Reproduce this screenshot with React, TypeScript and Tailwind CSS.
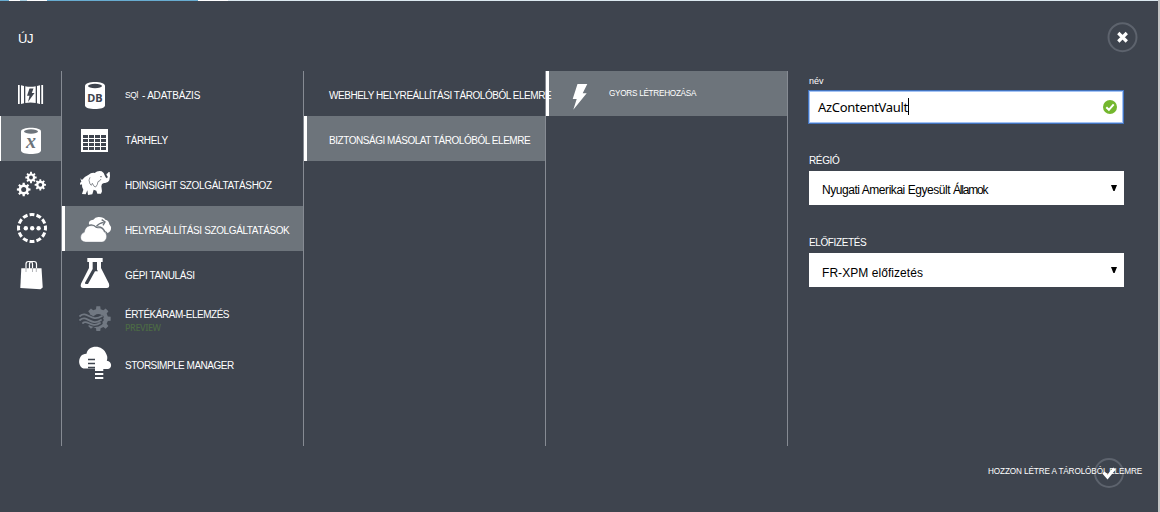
import type { ReactNode } from "react";

const BG = "#3e444e";
const SEL = "#6d747b";

function gearPath(cx: number, cy: number, outer: number, inner: number, teeth: number, offset = 0) {
  const step = (Math.PI * 2) / teeth;
  const pts: string[] = [];
  for (let i = 0; i < teeth; i++) {
    const a = i * step + offset - Math.PI / 2;
    const marks: [number, number][] = [
      [-0.3, inner],
      [-0.2, outer],
      [0.2, outer],
      [0.3, inner],
    ];
    for (const [t, r] of marks) {
      pts.push(`${(cx + Math.cos(a + t * step) * r).toFixed(2)} ${(cy + Math.sin(a + t * step) * r).toFixed(2)}`);
    }
  }
  return `M${pts.join("L")}Z`;
}

function Gear({ cx, cy, r, hole }: { cx: number; cy: number; r: number; hole: number }) {
  return (
    <>
      <path d={gearPath(cx, cy, r, r * 0.74, 8)} fill="#fff" />
      <circle cx={cx} cy={cy} r={hole} fill={BG} />
    </>
  );
}

function RailItem({ y, selected, children }: { y: number; selected?: boolean; children: ReactNode }) {
  return (
    <div className={selected ? "h-[45px] border-l border-white bg-[#6d747b]" : "h-[45px] border-l border-transparent"}>
      <svg className="block h-[45px] w-[60px]" viewBox={`1 ${y} 60 45`}>
        {children}
      </svg>
    </div>
  );
}

function ServiceItem({
  y,
  selected,
  icon,
  children,
}: {
  y: number;
  selected?: boolean;
  icon: ReactNode;
  children: ReactNode;
}) {
  return (
    <div
      className={
        selected
          ? "flex h-[45px] items-center border-l-[3px] border-white bg-[#6d747b]"
          : "flex h-[45px] items-center border-l-[3px] border-transparent"
      }
    >
      <svg className="block h-[45px] w-[60px] shrink-0" viewBox={`65 ${y} 60 45`}>
        {icon}
      </svg>
      <div className="pt-[5px] leading-[14px] whitespace-nowrap">{children}</div>
    </div>
  );
}

function Select({ children }: { children: ReactNode }) {
  return (
    <div className="flex h-[34px] items-center justify-between bg-white pr-[7px] pl-[13px] tracking-normal text-black">
      {children}
      <svg className="h-[6px] w-[6px]" viewBox="0 0 6 6">
        <path d="M0 0H6L3.6 6H2.4Z" fill="#000" />
      </svg>
    </div>
  );
}

const databaseIcon = (
  <>
    <path d="M85 86C85 80.800 105 80.800 105 86V105.500C105 110.300 85 110.300 85 105.500Z" fill="#fff" />
    <ellipse cx="95" cy="86" rx="7" ry="2.200" fill={BG} />
    <text x="95" y="102" textAnchor="middle" fontFamily="Noto Sans, sans-serif" fontWeight="700" fontSize="11" letterSpacing="0" fill={BG}>
      DB
    </text>
  </>
);

const tableIcon = (
  <>
    <rect x="81" y="129" width="27" height="23" fill="#fff" />
    {[135, 139, 143, 147].map((y) =>
      [83, 89, 95, 101].map((x) => <rect key={`${x}-${y}`} x={x} y={y} width="5" height="3" fill={BG} />),
    )}
  </>
);

const elephantIcon = (
  <g transform="translate(60 65) scale(.33333)">
    <path
      d="M61 340L66 345Q74 334 86 329Q94 322 104 324Q113 316 125 319Q132 322 135 333Q138 341 142 339Q145 335 140 331Q137 327 143 325Q145 320 149 321Q152 335 148 346Q143 356 132 354L126 357L124 364L126 379L123 386H112L109 377L101 374L97 388L84 390L82 376L77 388L66 387L70 374Q65 368 66 358L61 360L60 354L64 350Z"
      fill="#fff"
    />
    <path d="M90 337Q84 344 90 357L94 361L97 355Q103 368 107 366Q113 360 114 350Q121 348 123 342" fill="none" stroke={BG} strokeWidth="1.800" />
    <circle cx="123" cy="335" r="2" fill={BG} />
  </g>
);

const cloudsIcon = (
  <g transform="translate(60 200) scale(.33333)">
    <path
      d="M87 74Q84 61 100 59Q106 50 117 51Q131 51 136 59Q147 61 148 73Q154 79 153 88Q150 100 135 101L120 90L100 78Z"
      fill="#fff"
    />
    <path
      d="M77 126Q62 125 62 112Q62 101 73 97Q75 80 90 77Q104 74 114 85Q129 82 132 96Q142 101 139 115Q135 126 126 126Z"
      fill="#fff"
      stroke={SEL}
      strokeWidth="1"
    />
    <path d="M109 79Q117 69 131 67M125 59L135 66L129 76" fill="none" stroke={SEL} strokeWidth="4" />
    <path d="M84 77Q98 70 109 82Q126 77 134 94Q140 96 142 102" fill="none" stroke={SEL} strokeWidth="4" />
  </g>
);

const flaskIcon = (
  <g transform="translate(60 200) scale(.33333)">
    <path
      d="M82 174H128V186H123V204L147 251Q150 264 140 264H71Q59 264 63 251L87 204V186H82Z"
      fill="#fff"
    />
    <path d="M98 186H111V209L114 214H105L84 252H76L75 248L98 207Z" fill={BG} />
  </g>
);

const streamIcon = (
  <>
    <path d={gearPath(98.300, 318.700, 12.500, 9.800, 8)} fill="#717882" />
    <circle cx="98.300" cy="318.700" r="4.800" fill={BG} />
    <path d="M78 308H88V328H79Z" fill={BG} />
    <g fill="none" strokeLinecap="round">
      <path d="M80 316C87 309 91 323 102 317M80 320C87 313 91 327 102 320M82 323C87 318 92 330 101 323" stroke={BG} strokeWidth="3.500" />
      <path d="M80 316C87 310 91 323 102 316M80 320C87 314 91 327 101 320M83 323C87 319 92 329 100 323" stroke="#717882" strokeWidth="1.800" />
    </g>
  </>
);

const storsimpleIcon = (
  <>
    <path
      d="M85 368.500C77 368.500 77 353.500 86.500 353.700C88 344.500 103 344 106.500 354.500C107.800 357 107.300 359 106.800 360.800C112.500 361.500 112.500 369 107.500 369H103.300V371H95V368.500Z"
      fill="#fff"
    />
    <path d="M88 359.500H95M88 363.500H95M88 367.500H95" stroke={BG} strokeWidth="1.400" />
    <path d="M95 374H103.300M95 378H103.300" stroke="#fff" strokeWidth="2" />
  </>
);

export default function App() {
  return (
    <div className="flex h-[512px] w-[1160px] flex-col overflow-hidden border-r-2 border-[#c4c4c4] bg-[#3e444e] font-['Liberation_Sans',Arial,sans-serif] text-[10px] tracking-[-0.38px] text-white">
      <div className="flex h-px shrink-0 bg-white">
        <div className="w-[9px] bg-[#67acd0]" />
        <div className="w-[11px]" />
        <div className="w-[7px] bg-[#a6cfe3]" />
        <div className="w-[20px]" />
        <div className="w-[151px] bg-[#67acd0]" />
        <div className="w-[30px]" />
        <div className="w-[930px] bg-[#dce9f0]" />
      </div>

      <header className="flex h-[70px] shrink-0 items-start justify-between pr-[20px] pl-[18px]">
        <h1 className="mt-[30px] text-[13px] leading-[16px] tracking-[-0.4px]">ÚJ</h1>
        <button className="mt-[21px] block h-[31px] w-[31px]">
          <svg className="block" width="31" height="31" viewBox="0 0 31 31" fill="none">
            <circle cx="15.500" cy="15.200" r="14" stroke="#5d636d" strokeWidth="2" />
            <path d="M11.300 11L19.800 19.500M19.800 11L11.300 19.500" stroke="#fff" strokeWidth="3.200" />
          </svg>
        </button>
      </header>

      <main className="flex h-[375px] shrink-0">
        <nav className="w-[62px] border-r border-[#868b93]">
          <RailItem y={71}>
            <path
              d="M18 85H19.700V104H18ZM21 85.300L24 85.900V103.300L21 103.900ZM25.300 86.200Q30.500 87.300 35.700 86.200V103Q30.500 102 25.300 103ZM37 85.900L40 85.300V103.900L37 103.300ZM41.300 85H43.100V104H41.300Z"
              fill="#fff"
            />
            <path d="M29.500 88.500H33.500L31.800 93H34.500L28 102L29.500 95.700H27Z" fill={BG} />
          </RailItem>
          <RailItem y={116} selected>
            <path d="M21 131.500C21 126.500 41 126.500 41 131.500V150.500C41 155.300 21 155.300 21 150.500Z" fill="#fff" />
            <ellipse cx="31" cy="131.500" rx="7" ry="2.200" fill={SEL} />
            <text x="31" y="148" textAnchor="middle" fontFamily="Liberation Serif, serif" fontStyle="italic" fontWeight="700" fontSize="20" letterSpacing="0" fill={SEL}>
              x
            </text>
          </RailItem>
          <RailItem y={161}>
            <Gear cx={31} cy={177.500} r={5.700} hole={1.900} />
            <Gear cx={23.700} cy={189.500} r={6.900} hole={2.500} />
            <Gear cx={40.300} cy={184.800} r={5.700} hole={1.900} />
          </RailItem>
          <RailItem y={206}>
            <circle
              cx="32"
              cy="228"
              r="13.500"
              fill="none"
              stroke="#fff"
              strokeWidth="3"
              pathLength="120"
              strokeDasharray="7 3"
              strokeDashoffset="3.500"
            />
            <circle cx="25.800" cy="228.200" r="2.200" fill="#fff" />
            <circle cx="32.200" cy="228.200" r="2.200" fill="#fff" />
            <circle cx="38.600" cy="228.200" r="2.200" fill="#fff" />
          </RailItem>
          <RailItem y={251}>
            <path d="M21.300 268.300H41.500L42.700 287.500L40.500 289.300L20.300 288Z" fill="#fff" />
            <path
              d="M26 269V264Q26 261.500 28.500 261.500H31Q32.500 262 32.500 264V269M29.500 269V264Q29.500 261.500 32 261.500H34Q36.500 261.500 36.500 264V269"
              fill="none"
              stroke="#fff"
              strokeWidth="1.200"
            />
            <path d="M26 268V272M32.500 268V272M36.300 268V272" stroke={BG} strokeWidth=".4" />
          </RailItem>
        </nav>

        <nav className="w-[242px] border-r border-[#868b93]">
          <ServiceItem y={71} icon={databaseIcon}>
            <span className="relative -top-px mr-[4px] text-[8.5px] tracking-[-0.4px]">SQl</span>
            <span className="tracking-[-0.2px]">- ADATBÁZIS</span>
          </ServiceItem>
          <ServiceItem y={116} icon={tableIcon}>
            TÁRHELY
          </ServiceItem>
          <ServiceItem y={161} icon={elephantIcon}>
            <span className="tracking-[-0.32px]">HDINSIGHT SZOLGÁLTATÁSHOZ</span>
          </ServiceItem>
          <ServiceItem y={206} icon={cloudsIcon} selected>
            HELYREÁLLÍTÁSI SZOLGÁLTATÁSOK
          </ServiceItem>
          <ServiceItem y={251} icon={flaskIcon}>
            GÉPI TANULÁSI
          </ServiceItem>
          <ServiceItem y={296} icon={streamIcon}>
            <div className="tracking-[-0.47px]">ÉRTÉKÁRAM-ELEMZÉS</div>
            <div className="-mt-px font-['Noto_Sans',sans-serif] text-[9px] leading-[13px] font-medium tracking-[-0.4px] text-[#4c6a45]">
              PREVIEW
            </div>
          </ServiceItem>
          <ServiceItem y={341} icon={storsimpleIcon}>
            <span className="tracking-[-0.5px]">STORSIMPLE MANAGER</span>
          </ServiceItem>
        </nav>

        <nav className="w-[242px] border-r border-[#868b93]">
          <div className="flex h-[45px] items-center pt-[3px] pl-[25px] whitespace-nowrap">
            <span className="relative z-10 tracking-[-0.46px]">WEBHELY HELYREÁLLÍTÁSI TÁROLÓBÓL ELEMRE</span>
          </div>
          <div className="flex h-[45px] items-center border-l-[3px] border-white bg-[#6d747b] pt-[3px] pl-[22px] whitespace-nowrap">
            <span className="tracking-[-0.46px]">BIZTONSÁGI MÁSOLAT TÁROLÓBÓL ELEMRE</span>
          </div>
        </nav>

        <nav className="w-[242px] border-r border-[#868b93]">
          <div className="flex h-[45px] items-center border-l-[3px] border-white bg-[#6d747b]">
            <svg className="block h-[45px] w-[60px]" viewBox="549 71 60 45">
              <path d="M577.500 84H587.300L582.700 93.300H586.700L573.300 109.700L576.700 99H572.700Z" fill="#fff" />
            </svg>
            <span className="text-[8.2px] leading-[12px] tracking-[-0.28px] whitespace-nowrap">GYORS LÉTREHOZÁSA</span>
          </div>
        </nav>

        <form className="ml-[21px] w-[315px]">
          <label className="block h-[19px] pt-[4px] text-[9px] leading-[12px] tracking-normal">név</label>
          <div className="mt-px flex h-[32px] w-[314px] items-center justify-between border border-[#a3c3f5] bg-white pr-[5px] pl-[8px] text-black ring-1 ring-[#4374bf]">
            <div className="flex items-center">
              <span className="mt-px font-['Noto_Sans',sans-serif] text-[13px] tracking-[-0.3px]">AzContentVault</span>
              <div className="mb-[2px] h-[17px] w-px bg-black" />
            </div>
            <svg width="14" height="14" viewBox="0 0 14 14" fill="none">
              <circle cx="7" cy="7" r="7" fill="#74b72e" />
              <path d="M3.300 7.200L5.900 9.800L10.700 4.300" stroke="#fff" strokeWidth="2" />
            </svg>
          </div>
          <label className="mt-[31px] block h-[17px] leading-[14px]">RÉGIÓ</label>
          <Select>
            <span className="mt-[3px] text-[12px] tracking-[-0.45px]">
              Nyugati Amerikai Egyesült <span className="tracking-[-1.2px]">Államok</span>
            </span>
          </Select>
          <label className="mt-[31px] block h-[17px] leading-[14px]">ELŐFIZETÉS</label>
          <Select>
            <span className="mt-[5px] text-[12px] tracking-[0.06px]">FR-XPM előfizetés</span>
          </Select>
        </form>
      </main>

      <footer className="flex h-[66px] items-start pt-[12px] pl-[988px]">
        <button className="relative flex h-[30px] items-center text-[8.2px] tracking-[-0.12px] whitespace-nowrap">
          <svg className="absolute top-0 left-[106px]" width="30" height="30" viewBox="0 0 30 30" fill="none">
            <circle cx="15" cy="15" r="14" stroke="#5d636d" strokeWidth="2" />
            <path d="M9.500 14.500L13.500 19L20.500 10.500" stroke="#fff" strokeWidth="3.200" />
          </svg>
          <span className="relative mb-px">HOZZON LÉTRE A TÁROLÓBÓL ELEMRE</span>
        </button>
      </footer>
    </div>
  );
}
